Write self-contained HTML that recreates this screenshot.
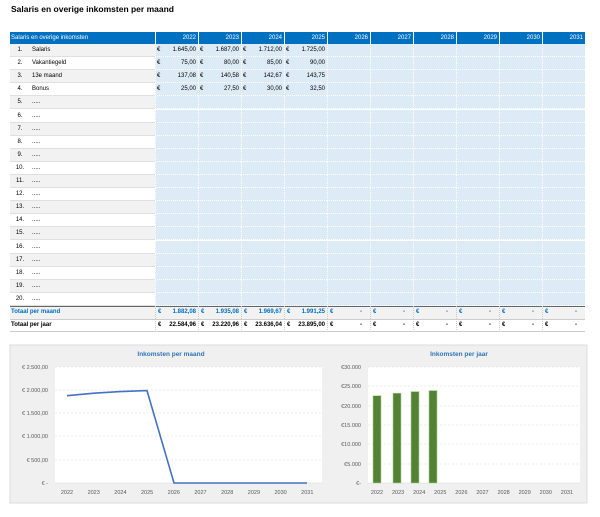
<!DOCTYPE html>
<html><head><meta charset="utf-8"><style>
body{margin:0;width:600px;height:517px;background:#fff;font-family:"Liberation Sans",sans-serif;position:relative;overflow:hidden}
h1{position:absolute;left:11px;top:4px;margin:0;font-size:8.5px;font-weight:bold;color:#000}
.c{position:absolute;font-size:6px;line-height:13px;height:13px;box-sizing:border-box;white-space:nowrap}
</style></head><body>
<h1>Salaris en overige inkomsten per maand</h1>
<div id="t"></div>
<svg style="position:absolute;left:0;top:0" width="600" height="517">
<rect x="10" y="345" width="577" height="158" fill="#f0f0f0" stroke="#ddd"/>
<rect x="55" y="367" width="267" height="116" fill="#fff"/>
<rect x="368" y="367" width="212" height="116" fill="#fff"/>
<g stroke="#d9d9d9" stroke-dasharray="2,2" stroke-width="0.6">
<line x1="55" x2="322" y1="367" y2="367"/><line x1="55" x2="322" y1="390" y2="390"/><line x1="55" x2="322" y1="413" y2="413"/><line x1="55" x2="322" y1="436" y2="436"/><line x1="55" x2="322" y1="460" y2="460"/>
<line x1="368" x2="580" y1="367" y2="367"/><line x1="368" x2="580" y1="386" y2="386"/><line x1="368" x2="580" y1="406" y2="406"/><line x1="368" x2="580" y1="425" y2="425"/><line x1="368" x2="580" y1="444" y2="444"/><line x1="368" x2="580" y1="464" y2="464"/>
</g>
<line x1="55" x2="322" y1="483" y2="483" stroke="#d9d9d9" stroke-width="0.6"/>
<line x1="368" x2="580" y1="483" y2="483" stroke="#d9d9d9" stroke-width="0.6"/>
<polyline points="67,395.7 94,393.2 120,391.6 147,390.6 174,483 200,483 227,483 254,483 280,483 307,483" fill="none" stroke="#4472c4" stroke-width="1.6"/>
<g fill="#548235" stroke="#a9d18e" stroke-width="0.6">
<rect x="373" y="395.7" width="8" height="87.3"/><rect x="393" y="393.2" width="8" height="89.8"/><rect x="411" y="391.6" width="8" height="91.4"/><rect x="429" y="390.6" width="8" height="92.4"/>
</g>
<g font-size="6.5" font-weight="bold" fill="#2e75b6" text-anchor="middle"><text x="171" y="356">Inkomsten per maand</text><text x="459" y="356">Inkomsten per jaar</text></g>
<g font-size="5.5" fill="#595959" text-anchor="end">
<text x="48" y="369">€ 2.500,00</text><text x="48" y="392">€ 2.000,00</text><text x="48" y="415">€ 1.500,00</text><text x="48" y="438">€ 1.000,00</text><text x="48" y="462">€ 500,00</text><text x="48" y="485">€ -</text>
<text x="361" y="369">€30.000</text><text x="361" y="388">€25.000</text><text x="361" y="408">€20.000</text><text x="361" y="427">€15.000</text><text x="361" y="446">€10.000</text><text x="361" y="466">€5.000</text><text x="361" y="485">€-</text>
</g>
<g font-size="5.5" fill="#595959" text-anchor="middle" id="xl"></g>
</svg>
<script>
var T=document.getElementById('t'),h='';
function c(x,y,w,txt,st){h+='<div class="c" style="left:'+x+'px;top:'+y+'px;width:'+w+'px;'+(st||'')+'">'+txt+'</div>';}
c(10,32,575,'','background:#0070c0;height:12px');
c(11,32,140,'Salaris en overige inkomsten','color:#fff;line-height:12px');
var yrs=[2022,2023,2024,2025,2026,2027,2028,2029,2030,2031];
for(var i=0;i<10;i++){c(155+i*43,32,43,yrs[i],'color:#fff;line-height:12px;text-align:right;padding-right:2px;border-left:1px solid #fff;height:12px');}
var names=['Salaris','Vakantiegeld','13e maand','Bonus'];
var vals=[['1.645,00','1.687,00','1.712,00','1.725,00'],['75,00','80,00','85,00','90,00'],['137,08','140,58','142,67','143,75'],['25,00','27,50','30,00','32,50']];
for(var r=0;r<20;r++){var y=44+r*13.1;var bg=r%2==0?'#f2f2f2':'#fff';
c(10,y,145,'',"background:"+bg+";border-bottom:1px solid #e0e0e0");
c(10,y,20,(r+1)+'.','text-align:center');
c(32,y,100,r<4?names[r]:'.....');
for(var i=0;i<10;i++){c(155+i*43,y,43,'','background:#ddebf7;border-left:1px dotted #fff;border-bottom:1px dotted #fff');
if(r<4&&i<4){c(157+i*43,y,10,'€');c(155+i*43,y,41,vals[r][i],'text-align:right');}}}
c(10,306,575,'','border-top:1.5px solid #666;background:#f2f2f2');
c(10,319,575,'','border-top:1px solid #ccc;border-bottom:1px solid #ccc');
c(11,306,140,'Totaal per maand','color:#0070c0;font-weight:bold');
c(11,319,140,'Totaal per jaar','font-weight:bold');
var m=['1.882,08','1.935,08','1.969,67','1.991,25'],j=['22.584,96','23.220,96','23.636,04','23.895,00'];
for(var i=0;i<10;i++){c(155+i*43,306,43,'','border-left:1px dotted #ccc');c(155+i*43,319,43,'','border-left:1px dotted #ccc');
c(158+i*43,306,10,'€','color:#0070c0;font-weight:bold');c(155+i*43,306,41,i<4?m[i]:'-','text-align:right;color:#0070c0;font-weight:bold;padding-right:'+(i<4?0:6)+'px');
c(158+i*43,319,10,'€','font-weight:bold');c(155+i*43,319,41,i<4?j[i]:'-','text-align:right;font-weight:bold;padding-right:'+(i<4?0:6)+'px');}
T.innerHTML=h;
var g='';for(var i=0;i<10;i++){g+='<text x="'+(67+i*26.7)+'" y="494">'+yrs[i]+'</text><text x="'+(377+i*21.1)+'" y="494">'+yrs[i]+'</text>';}
document.getElementById('xl').innerHTML=g;
</script>
</body></html>
